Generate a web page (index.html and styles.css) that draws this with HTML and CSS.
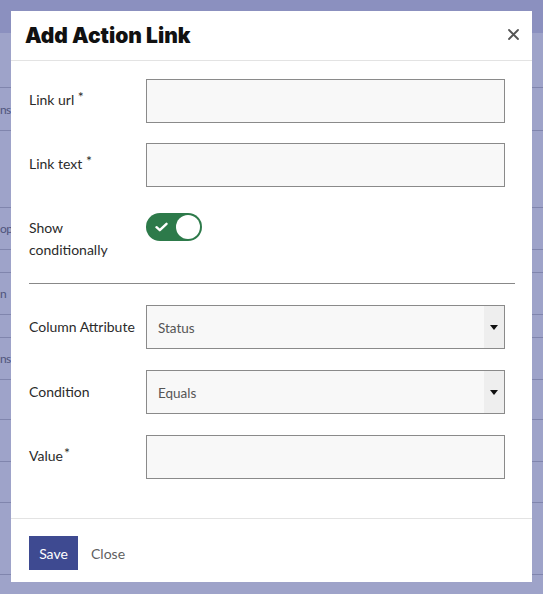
FILE: index.html
```html
<!DOCTYPE html>
<html lang="en">
<head>
<meta charset="utf-8">
<title>Add Action Link</title>
<link rel="stylesheet" href="styles.css">
</head>
<body>
<div class="page">
  <div class="page-top"></div>
  <div class="table">
    <div class="trow r1"><span class="cell"></span></div>
    <div class="trow r2"><span class="cell">ns</span></div>
    <div class="trow r3"><span class="cell"></span></div>
    <div class="trow r4"><span class="cell">op</span></div>
    <div class="trow r5"><span class="cell"></span></div>
    <div class="trow r6"><span class="cell">n</span></div>
    <div class="trow r7"><span class="cell"></span></div>
    <div class="trow r8"><span class="cell">ns</span></div>
    <div class="trow r9"><span class="cell"></span></div>
    <div class="trow r10"><span class="cell"></span></div>
    <div class="trow r11"><span class="cell"></span></div>
    <div class="trow r12"><span class="cell"></span></div>
  </div>
</div>

<div class="modal" role="dialog" aria-labelledby="modal-title">
  <div class="modal-header">
    <h2 id="modal-title" class="modal-title">Add Action Link</h2>
    <button class="close-x" aria-label="Close">
      <svg width="11" height="11" viewBox="0 0 11 11"><path d="M1 1L10 10M10 1L1 10" stroke="#555" stroke-width="1.8" stroke-linecap="round"/></svg>
    </button>
  </div>
  <div class="modal-body">
    <div class="form-row row-url">
      <label class="label">Link url <sup class="req">*</sup></label>
      <input class="field" type="text">
    </div>
    <div class="form-row row-text">
      <label class="label">Link text <sup class="req">*</sup></label>
      <input class="field" type="text">
    </div>
    <div class="form-row row-toggle">
      <label class="label label-toggle">Show conditionally</label>
      <div class="toggle">
        <svg class="check" width="13" height="10" viewBox="0 0 13 10"><path d="M1.5 5.2L4.8 8.2L11.5 1.8" fill="none" stroke="#fff" stroke-width="2.4" stroke-linecap="round" stroke-linejoin="round"/></svg>
        <span class="knob"></span>
      </div>
    </div>
    <hr class="divider">
    <div class="form-row row-sel">
      <label class="label">Column Attribute</label>
      <div class="select">
        <select><option>Status</option></select>
        <span class="arrow"><span class="tri"></span></span>
      </div>
    </div>
    <div class="form-row row-sel">
      <label class="label">Condition</label>
      <div class="select">
        <select><option>Equals</option></select>
        <span class="arrow"><span class="tri"></span></span>
      </div>
    </div>
    <div class="form-row row-value">
      <label class="label">Value<sup class="req tight">*</sup></label>
      <input class="field" type="text">
    </div>
  </div>
  <div class="modal-footer">
    <button class="btn-save">Save</button>
    <button class="btn-close">Close</button>
  </div>
</div>
</body>
</html>
```

FILE: styles.css
```css
* { box-sizing: border-box; }
html, body { margin: 0; padding: 0; }
body {
  width: 543px;
  height: 594px;
  overflow: hidden;
  background: #9ea3c9;
  font-family: Lato, "Liberation Sans", sans-serif;
  position: relative;
}

/* dimmed page behind the modal */
.page { width: 543px; }
.page-top { height: 33px; background: #8b90bf; }
.table { display: flex; flex-direction: column; }
.trow {
  border-bottom: 1px solid #8085ad;
  display: flex;
  align-items: center;
}
.r1 { height: 55px; }
.r2 { height: 43px; }
.r3 { height: 77px; }
.r4 { height: 42px; }
.r5 { height: 23px; }
.r6 { height: 42px; }
.r7 { height: 23px; }
.r8 { height: 42px; }
.r9 { height: 40px; }
.r10 { height: 42px; }
.r11 { height: 41px; }
.r12 { height: 72px; }
.cell {
  width: 11px;
  white-space: nowrap;
  font-size: 12px;
  letter-spacing: -0.6px;
  color: #4f547c;
  padding-left: 0;
}

/* modal */
.modal {
  position: absolute;
  top: 11px;
  left: 11px;
  width: 521px;
  background: #fff;
  color: #2b2b2b;
}
.modal-header {
  height: 50px;
  border-bottom: 1px solid #e3e3e3;
  display: flex;
  align-items: center;
  justify-content: space-between;
  padding: 0 13px 0 14px;
}
.modal-title {
  margin: 0;
  font-family: Inter, Lato, sans-serif;
  font-weight: 900;
  font-size: 21px;
  letter-spacing: 0;
  color: #111;
}
.close-x {
  border: 0;
  background: none;
  padding: 0;
  width: 11px;
  height: 11px;
  display: flex;
  margin-top: -3px;
}

.modal-body { padding: 18px 17px 39px 18px; }
.form-row {
  display: grid;
  grid-template-columns: 117px 359px;
  align-items: center;
}
.row-url { margin-bottom: 20px; }
.row-text { margin-bottom: 26px; }
.row-toggle { align-items: start; }
.row-sel { margin-bottom: 21px; }

.label {
  font-size: 14px;
  line-height: 22px;
  color: #2b2b2b;
  margin-top: -3px;
}
.row-sel .label { margin-top: 0; }
.label-toggle { margin-top: 0; padding-top: 4px; padding-right: 20px; }
.req { font-size: 14px; vertical-align: 3px; line-height: 0; }
.req.tight { margin-left: 1px; }

.field {
  height: 44px;
  width: 359px;
  border: 1px solid #8a8a8a;
  background: #f8f8f8;
  margin: 0;
  padding: 0 11px;
  font: inherit;
}

.toggle {
  width: 56px;
  height: 28px;
  border-radius: 14px;
  background: #2d7a4a;
  display: flex;
  align-items: center;
  justify-content: space-between;
  padding: 0 2px 0 9px;
}
.check { display: block; }
.knob {
  width: 24px;
  height: 24px;
  border-radius: 50%;
  background: #fff;
}

.divider {
  margin: 22px 0 21px;
  border: 0;
  border-top: 1px solid #888;
  height: 0;
}

.select {
  height: 44px;
  width: 359px;
  border: 1px solid #8a8a8a;
  background: #f8f8f8;
  display: flex;
}
.select select {
  flex: 1;
  border: 0;
  background: transparent;
  -webkit-appearance: none;
  appearance: none;
  font-family: Lato, "Liberation Sans", sans-serif;
  font-size: 13.5px;
  color: #555;
  padding: 1px 11px 0;
  outline: none;
}
.arrow {
  width: 20px;
  background: #eeeeee;
  display: flex;
  align-items: center;
  justify-content: center;
}
.tri {
  width: 0;
  height: 0;
  border-left: 4px solid transparent;
  border-right: 4px solid transparent;
  border-top: 5px solid #111;
  margin-top: 1px;
}

.modal-footer {
  border-top: 1px solid #e3e3e3;
  padding: 17px 18px 12px;
  display: flex;
  align-items: center;
}
.btn-save {
  height: 34px;
  width: 49px;
  padding: 0;
  border: 0;
  background: #3e4a91;
  color: #fff;
  font-family: Lato, "Liberation Sans", sans-serif;
  font-size: 14px;
}
.btn-close {
  margin-left: 13px;
  border: 0;
  background: none;
  padding: 0;
  font-family: Lato, "Liberation Sans", sans-serif;
  font-size: 14px;
  color: #5f5f5f;
}
```
